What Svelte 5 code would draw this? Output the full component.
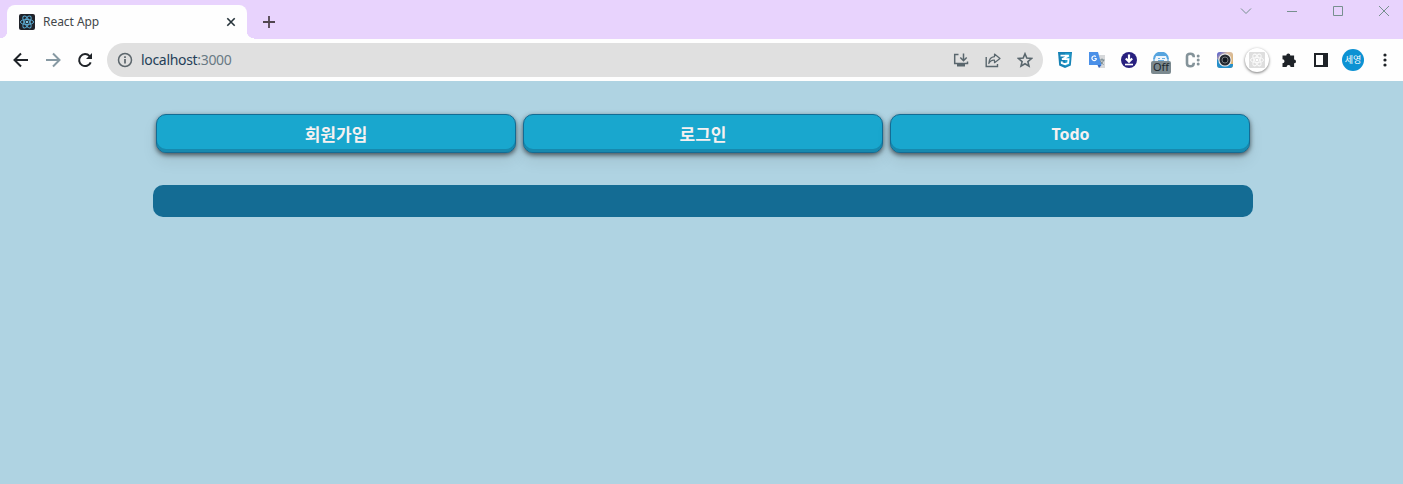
<script>
  const links = ['회원가입', '로그인', 'Todo'];
</script>

<div class="browser">
  <header class="tabs">
    <i class="flare left"></i>
    <div class="tab">
      <svg class="favicon" width="16" height="16" viewBox="0 0 16 16">
        <rect width="16" height="16" rx="2" fill="#20232a" />
        <g fill="none" stroke="#5aa9d0" stroke-width="1">
          <ellipse cx="8" cy="8" rx="6.6" ry="2.6" />
          <ellipse cx="8" cy="8" rx="6.6" ry="2.6" transform="rotate(60 8 8)" />
          <ellipse cx="8" cy="8" rx="6.6" ry="2.6" transform="rotate(120 8 8)" />
        </g>
        <circle cx="8" cy="8" r="1.3" fill="#7cc4e4" />
      </svg>
      <span class="title">React App</span>
      <svg width="16" height="16" viewBox="0 0 16 16" stroke="#26333a" stroke-width="1.6"><path d="M4.300 4.300l7.400 7.400M11.700 4.300l-7.400 7.400" /></svg>
    </div>
    <i class="flare right"></i>
    <svg class="plus" width="14" height="14" viewBox="0 0 14 14" stroke="#51454f" stroke-width="1.8"><path d="M7 1v12M1 7h12" /></svg>
    <div class="controls">
      <svg width="12" height="12" viewBox="0 0 12 12"><path d="M1 3.5l5 5 5-5" /></svg>
      <svg width="12" height="12" viewBox="0 0 12 12"><path d="M1 6.5h10" /></svg>
      <svg width="12" height="12" viewBox="0 0 12 12"><path d="M1.5 1.5h9v9h-9z" /></svg>
      <svg width="12" height="12" viewBox="0 0 12 12"><path d="M1 1l10 10M11 1L1 11" /></svg>
    </div>
  </header>

  <div class="toolbar">
    <div class="nav">
      <svg width="20" height="20" viewBox="0 0 20 20" stroke="#1f2328"><path d="M17 10H4M10 3.5L3.5 10l6.5 6.5" /></svg>
      <svg width="20" height="20" viewBox="0 0 20 20" stroke="#8799a3"><path d="M3 10h13M10 3.5l6.500 6.500-6.500 6.500" /></svg>
      <svg width="20" height="20" viewBox="0 0 20 20" stroke="#1f2328"><path d="M15.700 12.300A6 6 0 1 1 14.600 6.100" /><path d="M17 3v6h-6z" fill="#1f2328" stroke="none" /></svg>
    </div>
    <div class="address">
      <svg width="16" height="16" viewBox="0 0 16 16" fill="none" stroke="#5c666c"><circle cx="8" cy="8" r="6.500" stroke-width="1.500" /><path d="M8 7v4.500M8 4.300v1.600" stroke-width="1.700" /></svg>
      <span class="url">localhost<span>:3000</span></span>
      <div class="actions">
        <svg width="16" height="16" viewBox="0 0 16 16"><path d="M5.500 2.500H1.700v9h12.800V9.500M10.500 1.500v7M7.300 5.500l3.200 3.200 3.200-3.200" stroke-width="1.500" /><path d="M4 13.200h8" stroke-width="2.600" /></svg>
        <svg width="16" height="16" viewBox="0 0 16 16"><path d="M1.200 5v9.500H12.500V12" /><path d="M9.500 2l5.500 4.500-5.500 4.200V8.200C7 8 5 9 3.800 11.500 4 7.500 6 5 9.500 4.700z" stroke-width="1.200" stroke-linejoin="round" /></svg>
        <svg width="16" height="16" viewBox="0 0 16 16"><path d="M8 1.800l1.800 4.300 4.700.4-3.600 3.100 1.100 4.600L8 11.800l-4 2.400 1.100-4.600-3.600-3.100 4.700-.4z" stroke-width="1.600" /></svg>
      </div>
    </div>

    <div class="extensions">
      <svg width="16" height="16" viewBox="0 0 16 16"><path d="M1 0h14l-1.200 13.500L8 16l-5.800-2.500z" fill="#1682b5" /><path d="M8 1.200h5.800l-1 11.300L8 14.500z" fill="#23a0cf" /><path d="M3.500 3.600h8.300L5 7.200h6.500l-.4 3.800L8 12.200l-3.200-1.200-.1-1.600" fill="none" stroke="#fff" stroke-width="1.800" /></svg>
      <svg width="16" height="16" viewBox="0 0 16 16"><path d="M6 3h10v13h-6z" fill="#d6d8da" /><path d="M0 0h9l3.500 13H0z" fill="#4a90e8" /><path d="M8.500 13h4L10 16z" fill="#3367c1" /><path d="M7.500 6.500H5.500M6.800 4.600A2.300 2.300 0 1 0 7.500 6.500" fill="none" stroke="#fff" stroke-width="1.200" /><path d="M11 8h4.500M13 6.500V8M14.500 8c-.5 2-1.500 3-2.500 4M11.500 9c.5 1.500 2 2.800 3 3.500" fill="none" stroke="#71838b" /></svg>
      <svg width="16" height="16" viewBox="0 0 16 16"><circle cx="8" cy="8" r="8" fill="#28207f" /><path d="M8 2.500v7M4.800 6.500L8 9.700l3.200-3.200" fill="none" stroke="#fff" stroke-width="2.200" /><path d="M4 12.500h8" stroke="#fff" stroke-width="1.600" /></svg>
      <div class="blocked">
        <svg width="16" height="16" viewBox="0 0 16 16"><path d="M0 12V7a8 7.500 0 0 1 16 0v5z" fill="#56a4df" /><path d="M3 4h10l1 3v5H2V7z" fill="#eef5fb" /><path d="M5 6.500h2M9 6.500h3M5 8.500h6" stroke="#6baee0" /><path d="M0 8h2M14 8h2" stroke="#d3e7f5" /></svg>
        <span>Off</span>
      </div>
      <svg width="16" height="16" viewBox="0 0 16 16" fill="none"><path d="M8.700 5.200V4.500Q8.700 1.700 5.300 1.700T2 4.500v7q0 2.800 3.300 2.800t3.400-2.800v-.7" stroke="#84939a" stroke-width="2.600" /><g fill="#84939a"><circle cx="13.200" cy="4" r="1.500" /><circle cx="13.200" cy="8" r="1.500" /><circle cx="13.200" cy="12" r="1.500" /></g></svg>
      <svg width="16" height="16" viewBox="0 0 16 16"><defs><linearGradient id="camera" x2="1" y2="1"><stop stop-color="#3b4bd0" /><stop offset=".35" stop-color="#d9bea9" /><stop offset="1" stop-color="#ddb15f" /></linearGradient></defs><rect width="16" height="16" rx="3" fill="url(#camera)" /><path d="M0 7l8 5 8 0v1a3 3 0 0 1-3 3H3a3 3 0 0 1-3-3z" fill="#258fcb" /><circle cx="8" cy="8" r="6.600" fill="#eee" /><circle cx="8" cy="8" r="5.500" fill="#252a32" /><circle cx="8" cy="8" r="3" fill="#111820" stroke="#77797d" /></svg>
      <div class="react"><svg width="16" height="16" viewBox="0 0 16 16"><rect width="16" height="16" rx="1" fill="#dedede" /><g fill="none" stroke="#fafafa"><ellipse cx="8" cy="8" rx="6.500" ry="2.600" /><ellipse cx="8" cy="8" rx="6.500" ry="2.600" transform="rotate(60 8 8)" /><ellipse cx="8" cy="8" rx="6.500" ry="2.600" transform="rotate(120 8 8)" /></g><circle cx="8" cy="8" r="1.300" fill="#fff" /></svg></div>
      <svg width="16" height="16" viewBox="0 0 16 16"><path d="M1.500 3.500h3.800a2 2 0 1 1 4 0h3.800v4a1.900 1.900 0 1 1 0 3.800V15H9.600a2 2 0 0 0-4 0H1.500v-3.800a2 2 0 0 0 0-4z" fill="#1f2328" /></svg>
      <svg width="16" height="16" viewBox="0 0 16 16"><path d="M2 2h12v12H2z" fill="none" stroke="#1f2328" stroke-width="2" /><path d="M10 2h4v12h-4z" fill="#1f2328" /></svg>
      <div class="avatar">세영</div>
      <svg width="16" height="16" viewBox="0 0 16 16" fill="#1f2328"><circle cx="8" cy="3" r="1.600" /><circle cx="8" cy="8" r="1.600" /><circle cx="8" cy="13" r="1.600" /></svg>
    </div>
  </div>

  <main>
    <nav>
      {#each links as label}
        <button class:latin={label === 'Todo'}>{label}</button>
      {/each}
    </nav>
    <section></section>
  </main>
</div>

<style>
  :global(body) { margin: 0; }
  * { box-sizing: border-box; }
  svg { display: block; flex: none; }
  .browser { width: 100%; height: 484px; display: flex; flex-direction: column; overflow: hidden; font-family: "Noto Sans", "Noto Sans CJK KR", sans-serif; }
  .tabs { height: 39px; flex: none; display: flex; align-items: flex-end; background: #e8d3fd; }
  .tab { width: 240px; height: 34px; display: flex; align-items: center; padding: 0 8px 0 12px; border-radius: 8px 8px 0 0; background: #fefefe; }
  .title { flex: 1; margin: -2px 0 0 8px; font-size: 12px; letter-spacing: -0.050px; color: #43474a; }
  .flare { width: 7px; height: 8px; }
  .left { background: radial-gradient(circle at 0 0, transparent 7px, #fefefe 7.500px); }
  .right { background: radial-gradient(circle at 100% 0, transparent 7px, #fefefe 7.500px); }
  .plus { margin: 0 0 10px 8px; }
  .controls { display: flex; gap: 34px; margin: 0 13px 22px auto; fill: none; stroke: #77908f; stroke-width: 1; }
  .toolbar { height: 42px; flex: none; display: flex; align-items: center; background: #fefefe; }
  .nav { width: 107px; flex: none; display: flex; gap: 12px; padding-left: 11px; fill: none; stroke-width: 2; }
  .address { width: 936px; flex: none; height: 34px; display: flex; align-items: center; border-radius: 17px; padding: 0 10px; background: #e0e0e0; }
  .url { margin: -1px 0 0 8px; font-size: 14px; letter-spacing: -0.320px; color: #253f58; }
  .url span { color: #697a84; }
  .actions { margin-left: auto; display: flex; gap: 16px; fill: none; stroke: #59666d; stroke-width: 1.400; }
  .extensions { display: flex; gap: 16px; align-items: center; margin-left: 14px; }
  .blocked { position: relative; width: 16px; height: 16px; }
  .blocked span { position: absolute; left: -2px; top: 9px; width: 20px; height: 13px; border-radius: 2px; background: #7b898f; color: #20282e; font-size: 11px; line-height: 12px; text-align: center; }
  .react { width: 24px; height: 24px; margin: 0 -4px; border-radius: 50%; display: grid; place-items: center; background: #fff; box-shadow: 0 1px 3px #0008; }
  .avatar { width: 22px; height: 22px; margin: 0 -3px; border-radius: 50%; background: #0c92d3; color: white; font: 9px/21px "Noto Sans CJK KR", sans-serif; text-align: center; }
  main { flex: 1; padding: 33px 0 0 3px; display: flex; flex-direction: column; align-items: center; background: #afd3e2; }
  nav { width: 1094px; display: flex; gap: 7px; }
  button { width: 360px; height: 39px; padding: 0 0 1px; border: 1px solid #146c94; border-radius: 10px; background: #19a7ce; color: #f6f1f1; box-shadow: inset 0 -3px #1689ae, 0 2px 5px rgba(0, 0, 0, .6), 0 8px 16px rgba(0, 0, 0, .08); font: 700 17px "Noto Sans CJK KR", sans-serif; }
  button.latin { padding: 1px 0 0 1px; font: 700 16px "Noto Sans", sans-serif; }
  section { width: 1100px; height: 32px; margin-top: 32px; border-radius: 10px; background: #146c94; }
</style>
